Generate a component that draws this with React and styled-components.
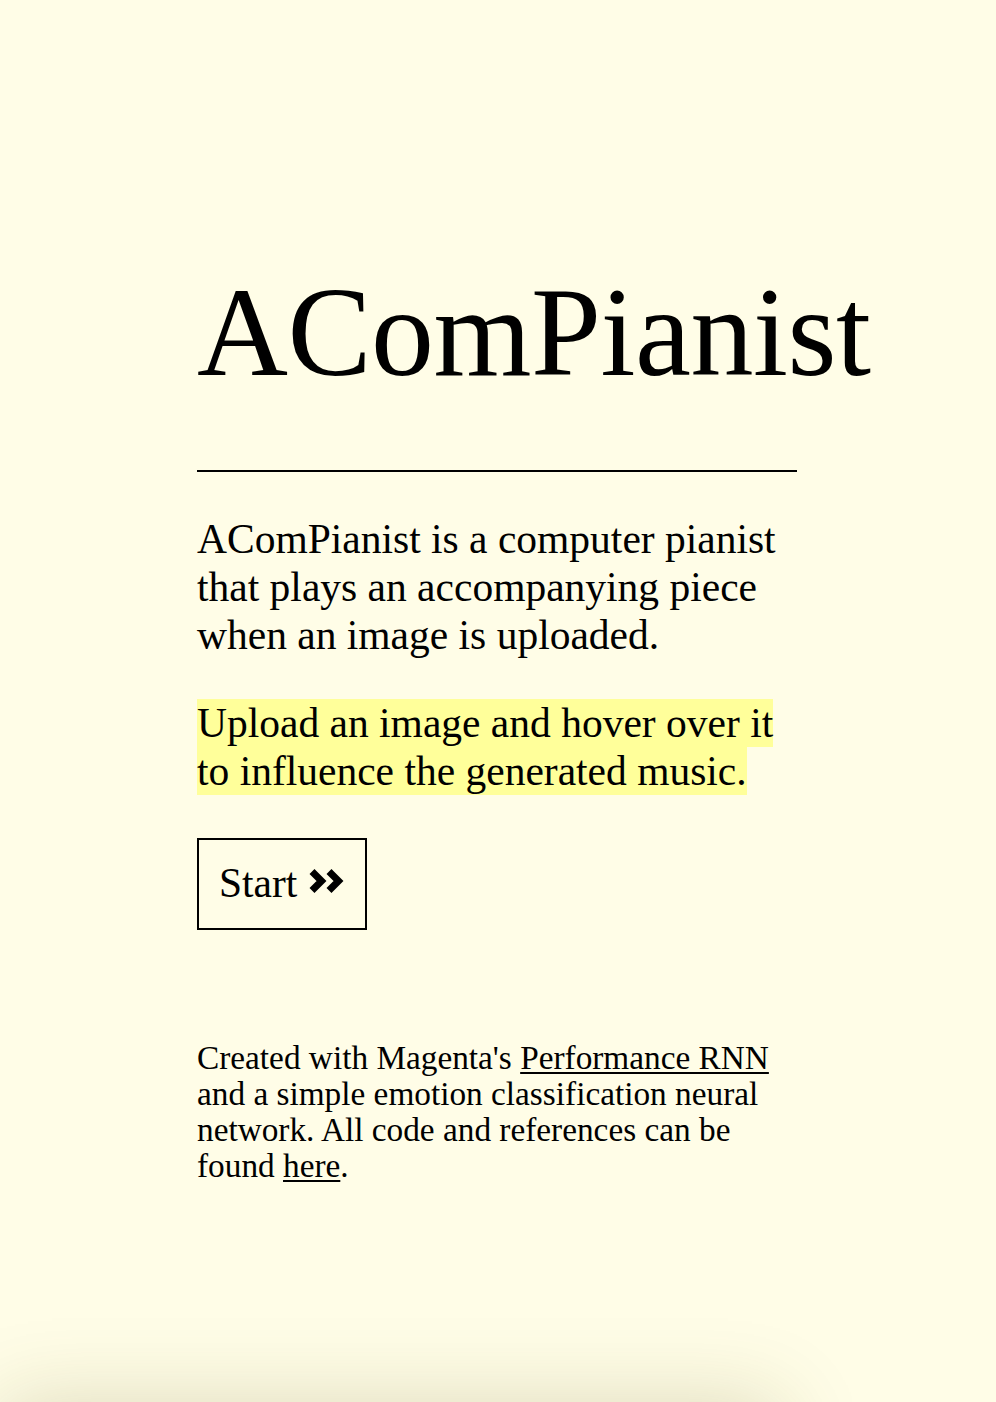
import React from 'react';
import styled, { createGlobalStyle } from 'styled-components';

const GlobalStyle = createGlobalStyle`
  html, body {
    margin: 0;
    padding: 0;
    background: #fffde7;
    color: #000;
    font-family: "Liberation Serif", "Times New Roman", serif;
  }
`;

const Intro = styled.section`
  min-height: 1402px;
  box-sizing: border-box;
  padding-top: 270px;
`;

const Column = styled.div`
  width: 600px;
  margin: 0 auto;
  transform: translateX(-1px);
`;

const Title = styled.h1`
  margin: 0;
  font-size: 126px;
  font-weight: normal;
  line-height: 126px;
  white-space: nowrap;
  letter-spacing: -0.5px;
`;

const Rule = styled.hr`
  margin: 74px 0 43px;
  border: 0;
  height: 2px;
  background: #000;
`;

const Lead = styled.p`
  margin: 0 0 40px;
  font-size: 41.5px;
  line-height: 48px;
`;

const Highlight = styled.span`
  background: #ffff9a;
  padding: 1px 0;
`;

const StartButton = styled.button`
  display: inline-flex;
  align-items: center;
  gap: 12px;
  margin: 3px 0 0;
  padding: 19px 21px 21px 20px;
  border: 2px solid #000;
  background: transparent;
  color: #000;
  font-family: inherit;
  font-size: 41.5px;
  line-height: 48px;
  cursor: pointer;
`;

const Chevrons = styled.svg`
  width: 35px;
  height: 26px;
  margin-top: -4px;
`;

const Credits = styled.p`
  margin: 110px 0 0;
  font-size: 33.3px;
  line-height: 36px;
`;

const Link = styled.a`
  color: inherit;
  text-decoration: underline;
  text-underline-offset: 3px;
  text-decoration-thickness: 2px;
`;

const NextPanel = styled.section`
  width: 780px;
  height: 400px;
  box-shadow: 0 0 80px rgba(90, 80, 20, 0.2);
`;

const App = () => (
  <>
    <GlobalStyle />
    <Intro>
      <Column>
        <Title>AComPianist</Title>
        <Rule />
        <Lead>AComPianist is a computer pianist that plays an accompanying piece when an image is uploaded.</Lead>
        <Lead>
          <Highlight>Upload an image and hover over it to influence the generated music.</Highlight>
        </Lead>
        <StartButton type="button">
          Start
          <Chevrons viewBox="0 0 35 26" aria-hidden="true">
            <polyline points="3,3.5 12.5,13 3,22.5" fill="none" stroke="#000" strokeWidth="7" strokeLinejoin="miter" />
            <polyline points="20,3.5 29.5,13 20,22.5" fill="none" stroke="#000" strokeWidth="7" strokeLinejoin="miter" />
          </Chevrons>
        </StartButton>
        <Credits>
          Created with Magenta's <Link href="#">Performance RNN</Link> and a simple emotion classification neural
          network. All code and references can be found <Link href="#">here</Link>.
        </Credits>
      </Column>
    </Intro>
    <NextPanel />
  </>
);

export default App;
